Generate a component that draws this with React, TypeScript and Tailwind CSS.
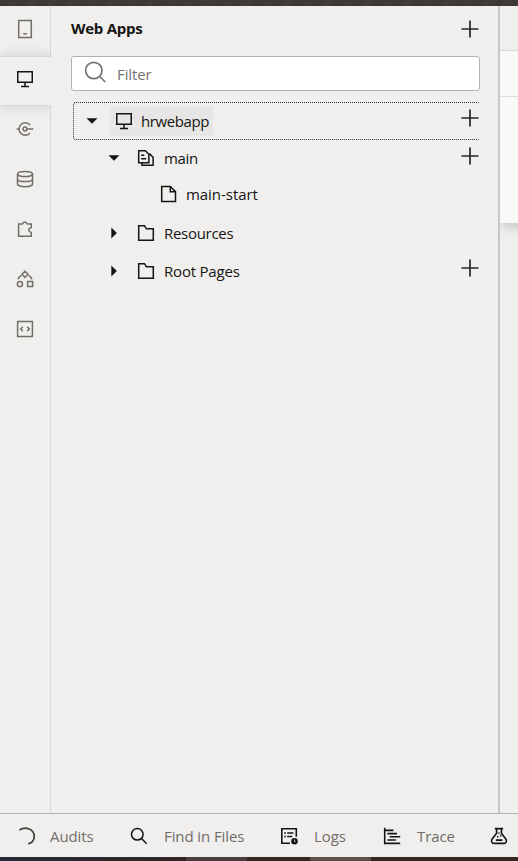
import type { ReactNode } from "react";

function Icon({ children, className = "", size = 18, stroke = 1.4 }: { children: ReactNode; className?: string; size?: number; stroke?: number }) {
  return (
    <svg width={size} height={size} viewBox={`0 0 ${size} ${size}`} fill="none" stroke="currentColor" strokeWidth={stroke} className={`block shrink-0 ${className}`}>
      {children}
    </svg>
  );
}

const Mobile = () => (
  <Icon size={20} stroke={1.5}>
    <path d="M3.7 1.6h12.6v16.8H3.7z" />
    <path d="M8.2 14.8h3.6" />
  </Icon>
);
const Monitor = () => (
  <Icon stroke={1.5}>
    <path d="M1.75 1.75h14.5v10.5H1.75zM9 12.5v4M5 16.4h8" />
  </Icon>
);
const Connection = () => (
  <Icon stroke={1.5}>
    <path d="M14 5A6.2 6.2 0 1 0 14 13M.6 9h2M11 9h6.2" />
    <circle cx="9" cy="9" r="1.9" />
  </Icon>
);
const Database = () => (
  <Icon stroke={1.5}>
    <ellipse cx="9" cy="4" rx="7.5" ry="2.6" />
    <path d="M1.5 4v10c0 1.5 3.4 2.7 7.5 2.7s7.5-1.2 7.5-2.7V4M1.5 9c0 1.5 3.4 2.6 7.5 2.6s7.5-1.1 7.5-2.6" />
  </Icon>
);
const Puzzle = () => (
  <Icon stroke={1.5}>
    <path d="M2.6 4.1h3.5c.6 0 .7-.3.8-.8.5-1.9 3.4-1.9 3.8 0 .1.5.3.8.9.8h3.7v3.2c0 .6-.4.7-1 .8-2 .4-2 3.4 0 3.8.6.1 1 .3 1 .9v3.4H2.6z" />
  </Icon>
);
const Shapes = () => (
  <Icon stroke={1.5}>
    <path d="M9 1.2l3.1 3.1L9 7.4 5.9 4.3zM5.2 5.4C3.7 6.5 2.6 7.7 2.1 9.4M12.8 5.4c1.5 1.1 2.6 2.3 3.1 4M11.6 11.6h5v5h-5z" />
    <circle cx="3.9" cy="14" r="2.6" />
  </Icon>
);
const Code = () => (
  <Icon stroke={1.5}>
    <path d="M1.6 1.6h14.8v14.8H1.6zM6.8 6.7L4.7 9l2.1 2.3M11.2 6.7L13.3 9l-2.1 2.3" />
  </Icon>
);
const Pages = () => (
  <Icon stroke={1.5}>
    <path d="M1.7 1.7h6.6l3.6 3.6v8.4H1.7zM4.2 6.2h3M4.2 9.7h5.1M12.4 4.6l3.7 3.6v8.1H5v-2.4" />
  </Icon>
);
const Page = () => (
  <Icon stroke={1.5}>
    <path d="M1.7 1.4h8.6l5.2 5.2v9.8H1.7zM10.3 1.7v5h4.9" />
  </Icon>
);
const Folder = () => (
  <Icon stroke={1.5}>
    <path d="M1.7 1.7h5.8l1.9 3.1h6.9v11.5H1.7z" />
  </Icon>
);
const Plus = ({ className = "" }: { className?: string }) => (
  <Icon stroke={1.7} className={`text-[#24262b] ${className}`}>
    <path d="M9 .5v17M.5 9h17" />
  </Icon>
);
const Search = () => (
  <Icon stroke={1.5}>
    <circle cx="7.3" cy="7.3" r="5.8" />
    <path d="M11.5 11.5l5.2 5.2" />
  </Icon>
);
const Spinner = () => (
  <Icon stroke={1.8} className="text-[#45423f]">
    <path d="M1.4 3C7.6-1 16.2 2.2 16.2 9.2c0 3.9-2.4 6.7-6 7.6" />
  </Icon>
);
const Logs = () => (
  <Icon stroke={1.6}>
    <path d="M10 16.2H1.8V1.7h14.5v8.1M4.2 6h1.7M7.2 6h6.2M4.2 9.5h1.7M7.2 9.5h5" />
    <circle cx="14.5" cy="14.2" r="3.3" fill="currentColor" stroke="none" />
    <path d="M14.5 12.6v1.9h1" stroke="#f0efed" strokeWidth=".8" />
  </Icon>
);
const Trace = () => (
  <Icon stroke={1.6}>
    <path d="M1.7 .8v15.6h15.5M2 3.4h8.5M4.4 6.6h9.6M6.6 9.8h10.6M4.4 13h8.4" />
  </Icon>
);
const Flask = () => (
  <Icon stroke={1.6}>
    <path d="M4.8 1.6h8.4M6.6 1.8v4.5L2.2 12c-1.4 2-.5 4.4 1.9 4.4h9.8c2.4 0 3.3-2.4 1.9-4.4l-4.4-5.7V1.8M5.8 13.1h6.6" />
    <path d="M7 9.8h1.4M10 8.6h1.3M8.3 6h1.2" />
  </Icon>
);

function Arrow({ open }: { open: boolean }) {
  return (
    <svg width="12" height="12" viewBox="0 0 12 12" fill="#151311" className="block shrink-0">
      <path d={open ? "M.5 3.3h11L6 8.8z" : "M3.3 .6L8.9 6l-5.6 5.4z"} />
    </svg>
  );
}

function TreeRow({ open, icon, label, plus, className }: { open?: boolean; icon: ReactNode; label: ReactNode; plus?: string; className: string }) {
  return (
    <div className={`flex items-center ${className}`}>
      {open !== undefined && <Arrow open={open} />}
      <div className={open === undefined ? "" : "ml-[17px]"}>{icon}</div>
      {label}
      {plus && <Plus className={`ml-auto mr-px ${plus}`} />}
    </div>
  );
}

export default function App() {
  const tools = [<Mobile />, <Monitor />, <Connection />, <Database />, <Puzzle />, <Shapes />, <Code />];
  return (
    <div className="flex h-[861px] w-[518px] flex-col overflow-hidden bg-[#f0efed] text-[15px] leading-5 text-[#161513] [font-family:'Open_Sans','Noto_Sans',sans-serif]">
      <div className="h-1.5 shrink-0 bg-[repeating-linear-gradient(135deg,#3c3834_0px,#3c3834_7px,#423d39_10px,#3c3834_14px)]" />
      <div className="flex min-h-0 flex-1">
        <nav className="flex w-[51px] shrink-0 flex-col">
          {tools.map((tool, i) => (
            <div
              key={i}
              className={
                i === 1
                  ? "flex h-[50px] shrink-0 items-center justify-center border-y border-[#d9d8d6] pb-1 pr-px text-[#161513] shadow-[0_0_12px_rgba(0,0,0,0.15)] [clip-path:inset(-12px_0_-12px_0)]"
                  : "flex h-[50px] shrink-0 items-center justify-center border-r border-[#d9d8d6] pb-1 text-[#716e6a]"
              }
            >
              {tool}
            </div>
          ))}
          <div className="flex-1 border-r border-[#d9d8d6]" />
        </nav>
        <main className="flex w-[447px] shrink-0 flex-col pl-5 pr-[18px]">
          <header className="flex h-[50px] items-center justify-between pb-1">
            <h1 className="mb-0.5 text-[15px] font-bold tracking-[-0.25px]">Web Apps</h1>
            <Plus className="mr-px" />
          </header>
          <div className="flex h-[35px] items-center rounded-[3px] border border-[#b5b3b1] bg-white pl-3 text-[#75726f]">
            <svg width="24" height="24" viewBox="0 0 24 24" fill="none" stroke="currentColor" strokeWidth="1.7" className="-mt-1 block">
              <circle cx="9.8" cy="10.5" r="8.2" />
              <path d="M15.7 16.5l5.5 5.5" />
            </svg>
            <span className="ml-[9px] text-[15px] tracking-[-0.1px]">Filter</span>
          </div>
          <section className="ml-0.5 mt-[11px]">
            <div className="flex h-[38px] items-center rounded-[3px] border border-dotted border-[#33302e] border-r-transparent pl-3">
              <Arrow open />
              <div className="ml-3 flex h-[30px] w-[103px] items-center bg-[#e7e6e4] pl-[5px]">
                <Monitor />
                <span className="ml-2 whitespace-nowrap tracking-[-0.4px]">hrwebapp</span>
              </div>
              <Plus className="mb-1.5 ml-auto" />
            </div>
            <TreeRow className="h-[37px] pb-0.5 pl-[35px]" open icon={<Pages />} label={<span className="ml-[9px] tracking-[-0.3px]">main</span>} plus="mb-1" />
            <TreeRow className="h-[37px] pb-1 pl-[87px]" icon={<Page />} label={<span className="ml-[8px] tracking-[-0.05px]">main-start</span>} />
            <TreeRow className="h-[38px] pl-[35px]" open={false} icon={<Folder />} label={<span className="ml-[9px] tracking-[-0.3px]">Resources</span>} />
            <TreeRow className="h-[38px] pl-[35px]" open={false} icon={<Folder />} label={<span className="ml-[9px] tracking-[-0.2px]">Root Pages</span>} plus="mb-1.5" />
          </section>
        </main>
        <aside className="w-5 shrink-0 overflow-hidden border-l-2 border-[#c8c7c5]">
          <div className="h-[217px] w-10 bg-[#faf9f8] shadow-[2px_3px_12px_rgba(0,0,0,0.2)]">
            <div className="h-[45px] border-b border-[#dbdad8] bg-[#f0efed]" />
            <div className="h-[46px] border-b border-[#dedddb]" />
          </div>
        </aside>
      </div>
      <footer className="flex h-11 shrink-0 items-center border-t border-[#b3b2b0] pl-[18px] tracking-[-0.1px] text-[#706d69]">
        <div className="flex w-[112px] shrink-0 items-center gap-[14px]"><Spinner /><span>Audits</span></div>
        <div className="flex w-[150px] shrink-0 items-center gap-4"><span className="text-[#161513]"><Search /></span><span>Find in Files</span></div>
        <div className="flex w-[103px] shrink-0 items-center gap-4"><span className="text-[#161513]"><Logs /></span><span>Logs</span></div>
        <div className="flex w-[107px] shrink-0 items-center gap-4"><span className="text-[#161513]"><Trace /></span><span>Trace</span></div>
        <span className="text-[#161513]"><Flask /></span>
      </footer>
      <div className="flex h-1 shrink-0 bg-[#342822]">
        <div className="w-[186px] bg-[linear-gradient(90deg,#202a36,#302522)]" />
        <div className="w-[61px] bg-[#48403d]" />
        <div className="w-[63px]" />
        <div className="w-[61px] bg-[#5b514c]" />
      </div>
    </div>
  );
}
